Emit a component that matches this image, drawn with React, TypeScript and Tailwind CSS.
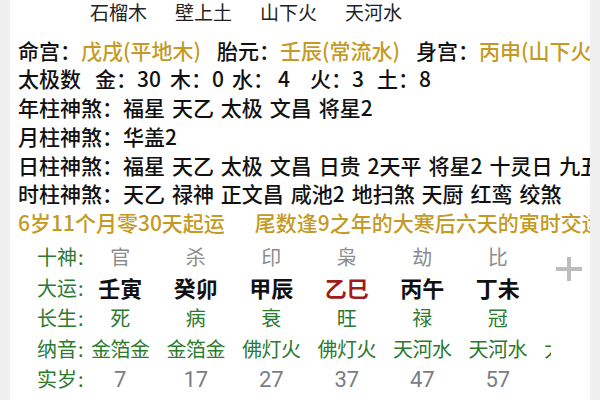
const cjk = "font-['Noto_Sans_CJK_SC',sans-serif]";
const gold = "text-[#c49a24]";

const naYinTop = ["石榴木", "壁上土", "山下火", "天河水"];

// 太极数: each item has a fixed width so the labels land where the reference has them
const taiJi = [
  { name: "太极数", value: "", w: "w-[77px]" },
  { name: "金：", value: "30", w: "w-[75px]" },
  { name: "木：", value: "0", w: "w-[62px]" },
  { name: "水：", value: "4", w: "w-[78px]" },
  { name: "火：", value: "3", w: "w-[67px]" },
  { name: "土：", value: "8", w: "w-[60px]" },
];

const shenSha = [
  { label: "年柱神煞：", text: "福星 天乙 太极 文昌 将星2" },
  { label: "月柱神煞：", text: "华盖2" },
  { label: "日柱神煞：", text: "福星 天乙 太极 文昌 日贵 2天平 将星2 十灵日 九丑" },
  { label: "时柱神煞：", text: "天乙 禄神 正文昌 咸池2 地扫煞 天厨 红鸾 绞煞" },
];

const shiShen = ["官", "杀", "印", "枭", "劫", "比", "食"];
const daYun = ["壬寅", "癸卯", "甲辰", "乙巳", "丙午", "丁未", "戊申"];
const changSheng = ["死", "病", "衰", "旺", "禄", "冠", "带"];
const naYin = ["金箔金", "金箔金", "佛灯火", "佛灯火", "天河水", "天河水", "大驿土"];
const age = ["7", "17", "27", "37", "47", "57", "67"];
const years = ["2001", "2011", "2021", "2031", "2041", "2051", "2061"];

function Row({ label, items, cellClass }: { label: string; items: string[]; cellClass: string }) {
  return (
    <div className="flex h-[30.5px] items-center whitespace-nowrap">
      <div className="w-[45.5px] shrink-0 text-[20px] text-[#2b7a2e]">
        {label}
        <span className="ml-[1px]">:</span>
      </div>
      {items.map((it, i) => (
        <div key={i} className={`w-[75.5px] shrink-0 text-center ${cellClass}`}>
          {it}
        </div>
      ))}
    </div>
  );
}

export default function App() {
  return (
    <div className={`flex h-[400px] w-[600px] overflow-hidden bg-[#efefef] ${cjk}`}>
      <div className="relative ml-[10px] h-full w-[580px] shrink-0 overflow-hidden bg-white pl-[8px] text-[#111]">
        <div className="flex h-[24px] items-center pl-[58px] text-[19px] leading-[24px] text-[#222]">
          {naYinTop.map((n) => (
            <div key={n} className="w-[85px] shrink-0 text-center">{n}</div>
          ))}
        </div>

        <div className="mt-[11.5px] text-[21px] font-medium leading-[28.8px] whitespace-nowrap [word-spacing:2.2px]">
          <div>
            命宫：<span className={gold}>戊戌(平地木)</span>
            <span className="ml-[16px]">胎元：</span><span className={gold}>壬辰(常流水)</span>
            <span className="ml-[16px]">身宫：</span><span className={gold}>丙申(山下火)</span>
          </div>
          <div className="flex">
            {taiJi.map((t) => (
              <span key={t.name} className={`${t.w} shrink-0`}>
                {t.name}
                {t.value && <span className={t.name === "水：" ? "ml-[4px]" : ""}>{t.value}</span>}
              </span>
            ))}
          </div>
          {shenSha.map((s) => (
            <div key={s.label}>
              {s.label}
              {s.text}
            </div>
          ))}
          <div className={gold}>
            6岁11个月零30天起运<span className="ml-[30px]">尾数逢9之年的大寒后六天的寅时交运</span>
          </div>
        </div>

        <div className="mt-[5px] ml-[19px] w-[514px] overflow-hidden">
          <Row label="十神" items={shiShen} cellClass="text-[20px] text-[#8c8c8c]" />
          <Row label="大运" items={daYun} cellClass="text-[22px] font-bold text-[#111] [&:nth-child(5)]:text-[#a01c1c]" />
          <Row label="长生" items={changSheng} cellClass="text-[20px] text-[#2b7a2e]" />
          <Row label="纳音" items={naYin} cellClass="text-[20px] text-[#2b7a2e] tracking-[-0.5px]" />
          <Row label="实岁" items={age} cellClass="font-['Roboto',sans-serif] text-[22px] text-[#7a7e84]" />
          <Row label="始于" items={years} cellClass="font-['Roboto',sans-serif] text-[20px] text-[#7a7e84]" />
        </div>

        <svg className="absolute left-[546px] top-[257px]" width="26" height="24" viewBox="0 0 26 24">
          <rect x="0" y="10" width="26" height="4" fill="#bdbdbd" />
          <rect x="11" y="0" width="4" height="24" fill="#bdbdbd" />
        </svg>
      </div>
      <div className="h-full flex-1 bg-[#efefef]" />
    </div>
  );
}
